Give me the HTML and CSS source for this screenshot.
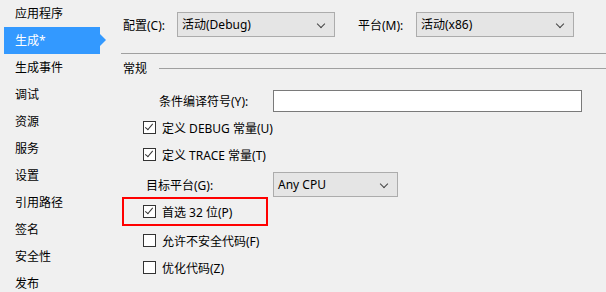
FILE: index.html
```html
<!DOCTYPE html>
<html lang="zh-CN">
<head>
    <meta charset="UTF-8">
    <title>项目属性 - 生成</title>
    <link rel="stylesheet" href="styles.css">
</head>
<body>
    <div class="window">
        <ul class="nav">
            <li>应用程序</li>
            <li class="active">生成*</li>
            <li>生成事件</li>
            <li>调试</li>
            <li>资源</li>
            <li>服务</li>
            <li>设置</li>
            <li>引用路径</li>
            <li>签名</li>
            <li>安全性</li>
            <li>发布</li>
        </ul>

        <div class="page">
            <div class="toolbar">
                <span class="label cfg-label">配置(C):</span>
                <div class="combo wide">活动(Debug)<span class="chev"></span></div>
                <span class="label plat-label">平台(M):</span>
                <div class="combo wide">活动(x86)<span class="chev"></span></div>
            </div>

            <div class="divider"></div>

            <div class="group-title">
                <span>常规</span>
                <div class="group-line"></div>
            </div>

            <div class="row symbols">
                <span class="label sym-label">条件编译符号(Y):</span>
                <div class="textbox"></div>
            </div>

            <div class="row check-row">
                <span class="box checked"></span>定义 DEBUG 常量(U)
            </div>
            <div class="row check-row">
                <span class="box checked"></span>定义 TRACE 常量(T)
            </div>

            <div class="row target">
                <span class="label target-label">目标平台(G):</span>
                <div class="combo narrow">Any CPU<span class="chev"></span></div>
            </div>

            <div class="row check-row highlight">
                <span class="box checked"></span>首选 32 位(P)
            </div>
            <div class="row check-row">
                <span class="box"></span>允许不安全代码(F)
            </div>
            <div class="row check-row">
                <span class="box"></span>优化代码(Z)
            </div>
        </div>
    </div>
</body>
</html>
```

FILE: styles.css
```css
body {
    margin: 0;
    background: #f0f0f0;
    color: #000;
    font-family: 'Noto Sans', 'Noto Sans CJK SC', sans-serif;
    font-size: 12px;
}
.window {
    display: flex;
    width: 606px;
    height: 292px;
    overflow: hidden;
}
.nav {
    list-style: none;
    margin: 0;
    padding: 0;
    width: 121px;
    flex-shrink: 0;
}
.nav li {
    position: relative;
    margin-left: 4px;
    width: 85px;
    height: 27px;
    line-height: 27px;
    padding-left: 11px;
}
.nav li.active {
    background: #3399ff;
    color: #fff;
}
.nav li.active::after {
    content: "";
    position: absolute;
    right: -6px;
    top: 7px;
    border-left: 6px solid #3399ff;
    border-top: 6px solid transparent;
    border-bottom: 6px solid transparent;
}
.page {
    flex: 1;
    display: flex;
    flex-direction: column;
}
.toolbar {
    display: flex;
    align-items: center;
    margin-top: 12px;
    height: 25px;
    padding-left: 2px;
}
.label {
    white-space: nowrap;
}
.cfg-label { width: 54px; }
.plat-label { margin-left: 23px; width: 58px; }
.combo {
    position: relative;
    box-sizing: border-box;
    height: 25px;
    line-height: 23px;
    padding-left: 4px;
    background: #e5e5e5;
    border: 1px solid #acacac;
}
.combo.wide { width: 158px; }
.combo.narrow { width: 125px; }
.chev {
    position: absolute;
    right: 10px;
    top: 8px;
    width: 5px;
    height: 5px;
    border-right: 1px solid #444;
    border-bottom: 1px solid #444;
    transform: rotate(45deg);
}
.divider {
    margin-top: 16px;
    height: 1px;
    background: #a0a0a0;
}
.group-title {
    display: flex;
    align-items: center;
    height: 14px;
    margin-top: 7px;
    padding-left: 2px;
}
.group-line {
    flex: 1;
    height: 1px;
    background: #a0a0a0;
    margin-left: 12px;
}
.row {
    display: flex;
    align-items: center;
    white-space: nowrap;
}
.symbols {
    margin-top: 15px;
    height: 22px;
    padding-left: 38px;
}
.sym-label { width: 114px; }
.textbox {
    box-sizing: border-box;
    width: 309px;
    height: 22px;
    background: #fff;
    border: 1px solid #7a7a7a;
}
.check-row {
    box-sizing: border-box;
    height: 27px;
    padding-left: 22px;
}
.symbols + .check-row { margin-top: 2px; }
.box {
    position: relative;
    flex-shrink: 0;
    box-sizing: border-box;
    width: 13px;
    height: 13px;
    margin-right: 6px;
    border: 1px solid #333;
    background: #fff;
}
.box.checked::after {
    content: "";
    position: absolute;
    left: 3px;
    top: 0px;
    width: 3px;
    height: 7px;
    border-right: 1.5px solid #333;
    border-bottom: 1.5px solid #333;
    transform: rotate(40deg);
}
.target {
    margin-top: 4px;
    height: 25px;
    padding-left: 25px;
}
.target-label { width: 127px; }
.highlight {
    height: 29px;
    border: 2px solid #ff0000;
    margin-left: 1px;
    padding-left: 19px;
    width: 146px;
}
.highlight + .check-row { margin-top: 1px; }
```
